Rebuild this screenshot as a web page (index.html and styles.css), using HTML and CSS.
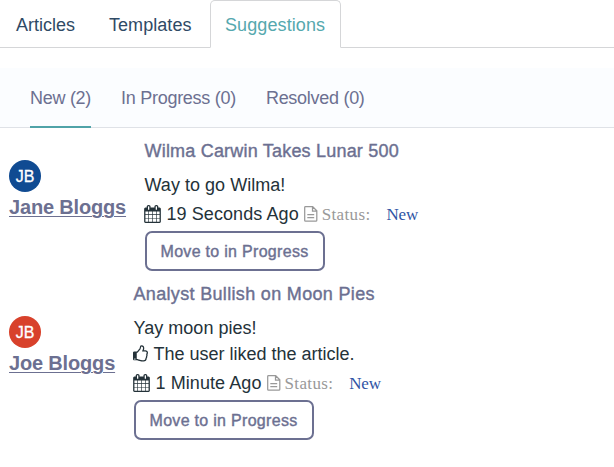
FILE: index.html
```html
<!DOCTYPE html>
<html lang="en">
<head>
<meta charset="utf-8">
<title>Suggestions</title>
<link rel="stylesheet" href="styles.css">
</head>
<body>
<svg width="0" height="0" class="sprite" aria-hidden="true">
<symbol id="calendar" viewBox="0 0 1664 1792"><path d="M128 1664h288v-288h-288v288zm352 0h320v-288h-320v288zm-352-352h288v-320h-288v320zm352 0h320v-320h-320v320zm-352-384h288v-288h-288v288zm736 736h320v-288h-320v288zm-384-736h320v-288h-320v288zm768 736h288v-288h-288v288zm-384-352h320v-320h-320v320zm-352-864v-288q0-13-9.500-22.500t-22.500-9.500h-64q-13 0-22.500 9.500t-9.500 22.500v288q0 13 9.500 22.500t22.500 9.500h64q13 0 22.500-9.500t9.500-22.500zm736 864h288v-320h-288v320zm-384-384h320v-288h-320v288zm384 0h288v-288h-288v288zm32-480v-288q0-13-9.500-22.500t-22.500-9.500h-64q-13 0-22.500 9.500t-9.500 22.500v288q0 13 9.500 22.500t22.500 9.500h64q13 0 22.500-9.500t9.500-22.500zm384-64v1280q0 52-38 90t-90 38h-1408q-52 0-90-38t-38-90v-1280q0-52 38-90t90-38h128v-96q0-66 47-113t113-47h64q66 0 113 47t47 113v96h384v-96q0-66 47-113t113-47h64q66 0 113 47t47 113v96h128q52 0 90 38t38 90z"/></symbol>
<symbol id="file" viewBox="0 0 14 16"><path d="M1.500.7H8.700L12.800 4.800V14.300Q12.800 15.200 11.900 15.200H1.500Q.7 15.200 .7 14.400V1.500Q.7.7 1.500.7ZM8.500.8V5H12.700M3.300 8.500H10.200M3.300 11.500H10.200" fill="none" stroke="currentColor" stroke-width="1.250"/></symbol>
<symbol id="thumb" viewBox="0 0 1536 1792"><path d="M256 1408q0-26-19-45t-45-19-45 19-19 45 19 45 45 19 45-19 19-45zm1152-640q0-51-39-89.500t-89-38.500h-352q0-58 48-159.500t48-160.500q0-98-32-145t-128-47q-26 26-38 85t-30.500 125.500-59.500 109.500q-22 23-77 91-4 5-23 30t-31.500 41-34.500 42.500-40 44-38.500 35.500-40 27-35.500 9h-32v640h32q13 0 31.500 3t33 6.500 38 11 35 11.500 35.500 12.500 29 10.500q211 73 342 73h121q192 0 192-167 0-26-5-56 30-16 47.500-52.500t17.500-73.500-18-69q53-50 53-119 0-25-10-55.500t-25-47.500q32-1 53.500-47t21.500-81zm128-1q0 89-49 163 9 33 9 69 0 77-38 144 3 21 3 43 0 101-60 178 1 139-85 219.500t-227 80.500h-129q-96 0-189.500-22.500t-216.500-65.500q-116-40-138-40h-288q-53 0-90.500-37.500t-37.500-90.500v-640q0-53 37.500-90.500t90.500-37.500h274q36-24 137-155 58-75 107-128 24-25 35.500-85.500t30.500-126.500 62-108q39-37 90-37 84 0 151 32.500t102 101.500 35 186q0 93-48 192h176q104 0 180 76t76 179z"/></symbol>
</svg>
<nav class="tabs">
<a class="tab articles">Articles</a>
<a class="tab templates">Templates</a>
<a class="tab active">Suggestions</a>
<span class="tab-rest"></span>
</nav>
<nav class="filters">
<a class="filter current">New (2)</a>
<a class="filter">In Progress (0)</a>
<a class="filter">Resolved (0)</a>
</nav>
<main>
<article class="item jane">
<div class="person"><div class="avatar">JB</div><a class="name">Jane Bloggs</a></div>
<div class="content">
<h2 class="title">Wilma Carwin Takes Lunar 500</h2>
<p class="comment">Way to go Wilma!</p>
<div class="meta"><svg class="icon cal"><use href="#calendar"/></svg><span class="time">19 Seconds Ago</span><svg class="icon file"><use href="#file"/></svg><span class="label">Status:</span><span class="status">New</span></div>
<button class="move">Move to in Progress</button>
</div>
</article>
<article class="item joe">
<div class="person"><div class="avatar">JB</div><a class="name">Joe Bloggs</a></div>
<div class="content">
<h2 class="title">Analyst Bullish on Moon Pies</h2>
<p class="comment">Yay moon pies!</p>
<p class="liked"><svg class="icon thumb"><use href="#thumb"/></svg><span>The user liked the article.</span></p>
<div class="meta"><svg class="icon cal"><use href="#calendar"/></svg><span class="time">1 Minute Ago</span><svg class="icon file"><use href="#file"/></svg><span class="label">Status:</span><span class="status">New</span></div>
<button class="move">Move to in Progress</button>
</div>
</article>
</main>
</body>
</html>
```
FILE: styles.css
```css
* { box-sizing: border-box; }
body { margin: 0; background: #fff; color: #243239; font: 18px/26px "Liberation Sans", Arial, sans-serif; white-space: nowrap; overflow: hidden; }
.sprite { display: block; }
.tabs { display: flex; height: 48px; color: #2f4a65; }
.tab { height: 48px; padding: 12px 15px 0; border-bottom: 1px solid #d5d6d8; }
.articles { width: 93px; padding-left: 16px; }
.templates { width: 117px; padding-left: 16px; letter-spacing: .05px; }
.active { width: 131px; color: #55a8ae; border: 1px solid #d5d6d8; border-bottom-color: #fff; border-radius: 5px 5px 0 0; padding: 11px 0 0 14px; letter-spacing: .1px; }
.tab-rest { flex: 1; border-bottom: 1px solid #d5d6d8; }
.filters { display: flex; gap: 30px; height: 60px; margin-top: 20px; padding-left: 30px; background: #fbfdff; border-bottom: 1px solid #dfe2e7; color: #6c7091; letter-spacing: -.28px; }
.filter { height: 60px; padding-top: 17px; }
.current { border-bottom: 2px solid #4fa3a8; }
.item { display: flex; }
.jane { height: 143px; }
.joe { height: 169px; }
.person { display: flex; flex-direction: column; justify-content: center; padding: 0 0 17px 9px; width: 144.5px; }
.joe .person { width: 133.5px; }
.avatar { width: 32px; height: 32px; border-radius: 50%; background: #104b92; color: #fff; font-size: 16px; line-height: 33px; text-align: center; -webkit-text-stroke: .3px; }
.joe .avatar { background: #d8412b; }
.name { align-self: flex-start; height: 30px; line-height: 30px; font-size: 20px; font-weight: 700; letter-spacing: -.17px; color: #6c7091; text-decoration: underline; text-decoration-thickness: 1px; text-underline-offset: 2px; }
.content { padding-top: 11px; }
.title { margin: 0; font-size: 18px; line-height: 24px; font-weight: 400; letter-spacing: .2px; color: #6c7091; -webkit-text-stroke: .4px; }
.joe .title { letter-spacing: .33px; }
.comment { margin: 9px 0 0; letter-spacing: .03px; }
.liked { margin: 0; display: flex; align-items: center; }
.meta { display: flex; align-items: center; height: 26px; margin-top: 3px; }
.time { letter-spacing: .08px; }
.icon { fill: currentColor; flex: none; }
.cal { width: 17px; height: 18px; margin: 0 5.500px 0 -.5px; }
.file { width: 14px; height: 16px; margin: 0 4px 0 5px; color: #999; }
.thumb { width: 15px; height: 18px; margin: 0 5.500px 0 -.5px; }
.label, .status { padding-top: 1px; font-family: "Liberation Serif", serif; font-size: 17px; color: #999; }
.label { letter-spacing: .35px; }
.status { color: #2f54a5; margin-left: 16px; letter-spacing: -.2px; }
.move { display: block; width: 180px; height: 40px; margin: 4px 0 0; padding: 1px 0 0; border: 2px solid #6c7091; border-radius: 7px; background: #fff; color: #6c7091; font: 16px "Liberation Sans", Arial, sans-serif; letter-spacing: .3px; -webkit-text-stroke: .4px; }
```
